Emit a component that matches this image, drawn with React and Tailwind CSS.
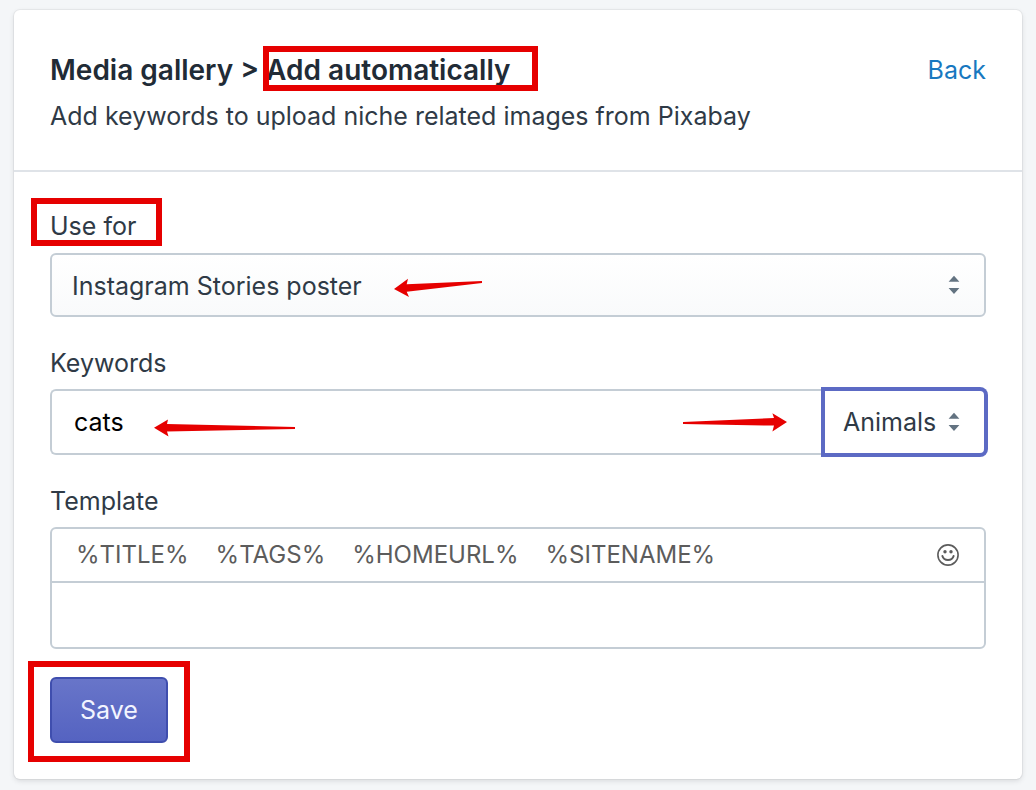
import { useState } from "react";

const TOKENS = ["%TITLE%", "%TAGS%", "%HOMEURL%", "%SITENAME%"];

function Highlight({ className }) {
  return (
    <span
      aria-hidden="true"
      className={`pointer-events-none absolute border-6 border-[#e60000] ${className}`}
    />
  );
}

function Arrow({ className, viewBox, d }) {
  return (
    <svg
      aria-hidden="true"
      viewBox={viewBox}
      className={`pointer-events-none absolute fill-[#e60000] ${className}`}
    >
      <path d={d} />
    </svg>
  );
}

function SortIcon() {
  return (
    <svg
      aria-hidden="true"
      viewBox="0 0 12 20"
      className="pointer-events-none absolute top-1/2 right-[26px] h-5 w-3 -translate-y-1/2 fill-[#637381]"
    >
      <path d="M6 0.8 L11.4 6.8 H0.6 Z M6 19 L11.4 13 H0.6 Z" />
    </svg>
  );
}

function SmileIcon() {
  return (
    <svg aria-hidden="true" viewBox="0 0 24 24" className="size-6 fill-none stroke-[#5c5c5c]">
      <circle cx="12" cy="12" r="10.1" strokeWidth="1.6" />
      <circle cx="9" cy="8.8" r="1.7" className="fill-[#5c5c5c] stroke-none" />
      <circle cx="15" cy="8.8" r="1.7" className="fill-[#5c5c5c] stroke-none" />
      <path d="M6.4 13 C8 18.4 16 18.4 17.6 13" strokeWidth="2" strokeLinecap="round" />
    </svg>
  );
}

export default function App() {
  const [keywords, setKeywords] = useState("cats");
  const [template, setTemplate] = useState("");

  return (
    <main className="min-h-screen bg-[#f4f6f8] px-3.5 py-2.5 font-['Inter','Liberation_Sans',sans-serif] text-[25px] leading-8 text-[#212b36]">
      <section className="rounded-md bg-white shadow-[0_0_0_1px_rgba(63,63,68,0.06),0_2px_5px_rgba(63,63,68,0.15)]">
        <header className="flex items-start justify-between border-b-2 border-[#dfe3e8] px-9 pt-10 pb-[38px]">
          <div>
            <h1 className="mb-2.5 text-[28px] leading-10 font-semibold">
              Media gallery &gt;{" "}
              <span className="relative">
                Add automatically
                <Highlight className="-top-[7px] -right-7 -left-[3px] h-[45px]" />
              </span>
            </h1>
            <p className="text-[#2f3a46]">Add keywords to upload niche related images from Pixabay</p>
          </div>
          <a href="#back" className="leading-10 text-[#1878c0]">
            Back
          </a>
        </header>

        <form className="px-9 pt-[38px] pb-9 text-[#2f3a46]" onSubmit={(e) => e.preventDefault()}>
          <div className="mb-[30px]">
            <div className="relative mb-[11px] w-fit">
              <label htmlFor="use-for" className="block">
                Use for
              </label>
              <Highlight className="-top-3 -right-[26px] -left-[19px] h-12" />
            </div>
            <div className="relative">
              <select
                id="use-for"
                className="block h-16 w-full appearance-none rounded-md border-2 border-[#c4cdd5] bg-linear-to-b from-white to-[#f9fafb] px-5 pt-0.5 outline-none"
              >
                <option>Instagram Stories poster</option>
              </select>
              <SortIcon />
              <Arrow
                className="top-6 left-[343px] h-5 w-[90px]"
                viewBox="394 277 90 20"
                d="M395 289 L409 278.7 L407.7 284.3 L483 281 V283 L407.7 291.8 L410 297 Z"
              />
            </div>
          </div>

          <div className="mb-[30px]">
            <label htmlFor="keywords" className="mb-2.5 block w-fit">
              Keywords
            </label>
            <div className="flex">
              <div className="relative min-w-0 flex-1">
                <input
                  id="keywords"
                  value={keywords}
                  onChange={(e) => setKeywords(e.target.value)}
                  className="block h-[66px] w-full rounded-l-md border-2 border-r-0 border-[#c4cdd5] bg-white px-[22px] text-black outline-none"
                />
                <Arrow
                  className="top-7 left-[103px] h-5 w-[144px]"
                  viewBox="153 417 144 20"
                  d="M154 427.8 L168 419.5 L167 424 L295 427 V429 L167 431.5 L168.5 436.5 Z"
                />
                <Arrow
                  className="top-[23px] right-[35px] h-5 w-[106px]"
                  viewBox="682 412 106 20"
                  d="M787 422 L772.4 413.2 L774 418 L683 422 V424 L774 425.6 L772.4 431.6 Z"
                />
              </div>
              <div className="relative w-[163px]">
                <select
                  aria-label="Category"
                  className="block h-[66px] w-full appearance-none rounded-r-md border-2 border-[#5c6ac4] bg-white pl-[18px] shadow-[0_0_0_2px_#5c6ac4] outline-none"
                >
                  <option>Animals</option>
                </select>
                <SortIcon />
              </div>
            </div>
          </div>

          <div className="mb-7">
            <label htmlFor="template" className="mb-2.5 block w-fit">
              Template
            </label>
            <div className="rounded-md border-2 border-[#c4cdd5]">
              <div className="flex items-center justify-between border-b-2 border-[#c4cdd5] px-6 py-2.5">
                <div className="flex gap-[27px] text-2xl text-[#5c5c5c]">
                  {TOKENS.map((token) => (
                    <button key={token} type="button" onClick={() => setTemplate(template + token)}>
                      {token}
                    </button>
                  ))}
                </div>
                <button type="button" aria-label="Insert emoji">
                  <SmileIcon />
                </button>
              </div>
              <textarea
                id="template"
                rows={1}
                value={template}
                onChange={(e) => setTemplate(e.target.value)}
                className="block h-16 w-full resize-none px-5 py-4 outline-none"
              />
            </div>
          </div>

          <div className="relative w-fit">
            <button
              type="submit"
              className="block h-[66px] rounded-md border-2 border-[#3f4eae] bg-linear-to-b from-[#6875c9] to-[#5563c1] px-7 text-[#f2f4ff]"
            >
              Save
            </button>
            <Highlight className="-top-4 -right-[22px] -left-[22px] h-[101px]" />
          </div>
        </form>
      </section>
    </main>
  );
}
